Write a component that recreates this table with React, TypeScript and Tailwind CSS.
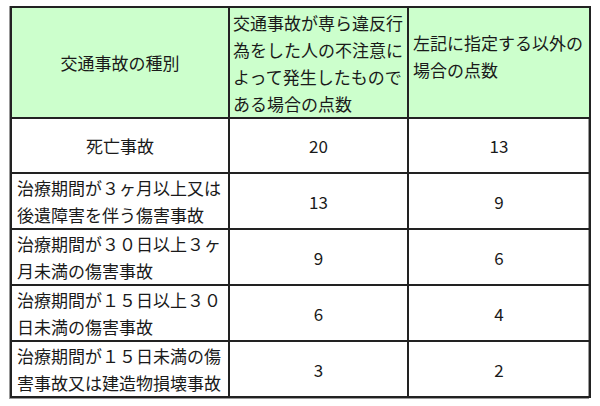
import React from "react";

const rows: { label: React.ReactNode; center?: boolean; a: string; b: string }[] = [
  { label: "死亡事故", center: true, a: "20", b: "13" },
  { label: <>治療期間が３ヶ月以上又は<br />後遺障害を伴う傷害事故</>, a: "13", b: "9" },
  { label: <>治療期間が３０日以上３ヶ<br />月未満の傷害事故</>, a: "9", b: "6" },
  { label: <>治療期間が１５日以上３０<br />日未満の傷害事故</>, a: "6", b: "4" },
  { label: <>治療期間が１５日未満の傷<br />害事故又は建造物損壊事故</>, a: "3", b: "2" },
];

export default function App() {
  return (
    <div
      className="w-[600px] h-[406px] bg-white pt-[6px] pl-[9px] text-[#1a1a1a] text-[17px] leading-[27px]"
      style={{ fontFamily: '"Noto Sans CJK JP", "Noto Sans", sans-serif' }}
    >
      <div className="w-[580px] border-l border-b border-r border-[#999]">
        <table className="border-collapse table-fixed w-[579px]">
          <colgroup>
            <col className="w-[218px]" />
            <col className="w-[179px]" />
            <col className="w-[182px]" />
          </colgroup>
          <thead>
            <tr className="h-[111px] bg-[#ccffcc]">
              <th className="border-2 border-[#222] font-normal text-center align-middle">交通事故の種別</th>
              <th className="border-2 border-[#222] font-normal text-left align-middle pl-[3px] whitespace-nowrap">
                交通事故が専ら違反行<br />為をした人の不注意に<br />よって発生したもので<br />ある場合の点数
              </th>
              <th className="border-2 border-[#222] font-normal text-left align-middle pl-[4px] pb-[14px] whitespace-nowrap">
                左記に指定する以外の<br />場合の点数
              </th>
            </tr>
          </thead>
          <tbody>
            {rows.map((r, i) => (
              <tr key={i} className="h-[55px]">
                <td className={`border-2 border-[#222] align-middle whitespace-nowrap ${r.center ? "text-center" : "text-left pl-[5px]"}`}>
                  {r.label}
                </td>
                <td className="border-2 border-[#222] text-center align-middle">{r.a}</td>
                <td className="border-2 border-[#222] text-center align-middle">{r.b}</td>
              </tr>
            ))}
          </tbody>
        </table>
      </div>
    </div>
  );
}
